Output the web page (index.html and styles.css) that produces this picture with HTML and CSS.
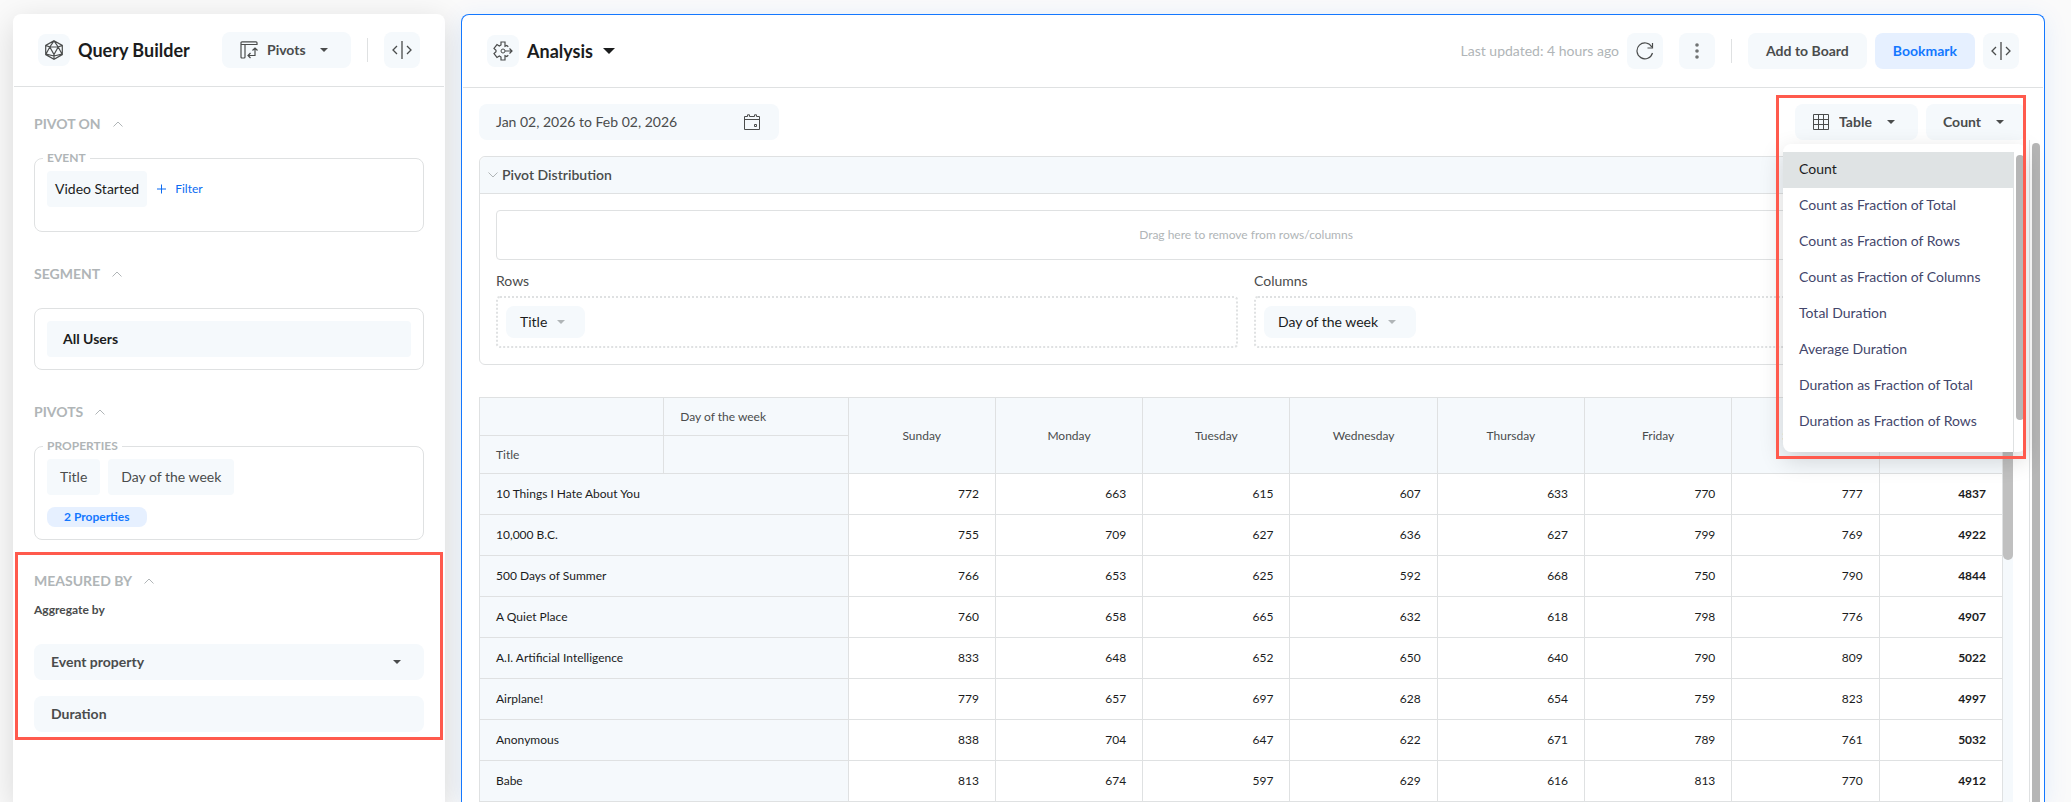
FILE: index.html
```html
<!DOCTYPE html>
<html lang="en">
<head>
  <meta charset="UTF-8" />
  <meta name="viewport" content="width=device-width, initial-scale=1.0" />
  <title>Query Builder</title>
  <link rel="stylesheet" href="styles.css">
</head>
<body>
  <div class="app">
    <aside class="sidebar">
      <header class="sidebar-header">
        <span class="icon-box">
          <svg width="20" height="20" viewBox="0 0 20 20"><path stroke-width="1.2" d="M10 .8 18.3 5.400v9.200L10 19.200 1.700 14.600V5.400zM10 .8 5.800 7 2 14l8 2 8-2-3.800-7zM1.700 5.400 5.800 7h8.400l4.100-1.600M5.800 7 10 14.500 14.200 7M10 14.500v4.700"/></svg>
        </span>
        <h1>Query Builder</h1>
        <label class="pick pivots-pick">
          <svg width="18" height="18" viewBox="0 0 18 18"><path stroke-width="1.2" d="M2 .8h14q1 0 1 1v1.700H5v12.500q0 1-1 1H2q-1 0-1-1V1.800q0-1 1-1zM1 3.500h4M15 7v7.500H8M12.500 9.500 15 7l2.500 2.500M10.500 12 8 14.500l2.500 2.500"/></svg>
          <select aria-label="Query type"><option>Pivots</option></select>
          <i class="caret"></i>
        </label>
        <span class="divider"></span>
        <button class="icon-btn" aria-label="Collapse query builder">
          <svg width="20" height="18" viewBox="0 0 20 18"><path stroke-width="1.3" d="M5 5 1 9l4 4M15 5l4 4-4 4M10 0v18"/></svg>
        </button>
      </header>

      <div class="sidebar-body">
        <section class="group">
          <h2>PIVOT ON <svg width="10" height="6" viewBox="0 0 10 6"><path d="M.5 5.500 5 1l4.500 4.500"/></svg></h2>
          <fieldset>
            <legend>EVENT</legend>
            <div class="chips event-chips">
              <button class="chip chip-event">Video Started</button>
              <button class="filter-btn"><svg width="9" height="10" viewBox="0 0 9 10"><path d="M4.500.5v9M0 5h9"/></svg>Filter</button>
            </div>
          </fieldset>
        </section>

        <section class="group">
          <h2>SEGMENT <svg width="10" height="6" viewBox="0 0 10 6"><path d="M.5 5.500 5 1l4.500 4.500"/></svg></h2>
          <div class="box">
            <button class="chip chip-wide">All Users</button>
          </div>
        </section>

        <section class="group">
          <h2>PIVOTS <svg width="10" height="6" viewBox="0 0 10 6"><path d="M.5 5.500 5 1l4.500 4.500"/></svg></h2>
          <fieldset>
            <legend>PROPERTIES</legend>
            <div class="chips">
              <button class="chip">Title</button>
              <button class="chip">Day of the week</button>
            </div>
            <button class="pill">2 Properties</button>
          </fieldset>
        </section>
      </div>

      <section class="measured">
        <h2>MEASURED BY <svg width="10" height="6" viewBox="0 0 10 6"><path d="M.5 5.500 5 1l4.500 4.500"/></svg></h2>
        <label class="aggregate" for="aggregate">Aggregate by</label>
        <div class="pick field">
          <select id="aggregate"><option>Event property</option></select>
          <i class="caret"></i>
        </div>
        <button class="field">Duration</button>
      </section>
    </aside>

    <main class="panel">
      <header class="panel-header">
        <span class="icon-box">
          <svg width="20" height="20" viewBox="0 0 20 20"><path stroke-width="1.2" d="M15.300 5.800 13.800 4.500l-1.800.8V1H8v3L6.300 5 4 3.600 1 7.500l2 1.800v1.400l-2 1.800 3 3.900L6.300 15 8 16v3h4v-4.300l1.800.8 1.500-1.300M12 10h7M16.500 7.500 19 10l-2.500 2.500"/><circle cx="10" cy="10" r="2"/></svg>
        </span>
        <h1>Analysis</h1>
        <button class="title-caret" aria-label="Switch analysis"><i class="caret caret-lg"></i></button>
        <span class="updated">Last updated: 4 hours ago</span>
        <button class="icon-btn" aria-label="Refresh">
          <svg width="18" height="18" viewBox="0 0 18 18"><path stroke-width="1.200" d="M16.500 11A7.900 7.900 0 1 1 15.800 5M16.500 1v5h-5"/></svg>
        </button>
        <button class="icon-btn more-btn" aria-label="More">
          <svg class="dots" width="4" height="18" viewBox="0 0 4 18"><circle cx="2" cy="3" r="1.800"/><circle cx="2" cy="9" r="1.800"/><circle cx="2" cy="15" r="1.800"/></svg>
        </button>
        <span class="divider"></span>
        <div class="actions">
          <button class="btn">Add to Board</button>
          <button class="btn btn-primary">Bookmark</button>
          <button class="icon-btn" aria-label="Collapse analysis">
            <svg width="20" height="18" viewBox="0 0 20 18"><path stroke-width="1.3" d="M5 5 1 9l4 4M15 5l4 4-4 4M10 0v18"/></svg>
          </button>
        </div>
      </header>

      <div class="toolbar">
        <button class="date-range">
          Jan 02, 2026 to Feb 02, 2026
          <svg width="16" height="16" viewBox="0 0 16 16"><path d="M.5 2.500h3V.8h2v1.700h5V.8h2v1.700h3v13H.5zM.5 5.500h15M10.500 10.500h2v2h-2z"/></svg>
        </button>
        <div class="view-picks">
          <label class="pick view-pick">
            <svg width="16" height="16" viewBox="0 0 16 16"><path d="M.5.5h15v15H.5zM.5 5.500h15M.5 10.500h15M5.500.5v15M10.500.5v15"/></svg>
            <select aria-label="View"><option>Table</option></select>
            <i class="caret"></i>
          </label>
          <button class="pick count-pick" aria-haspopup="listbox" aria-expanded="true">Count <i class="caret"></i></button>
          <div class="menu">
            <ul role="listbox" aria-label="Measure">
              <li role="option" aria-selected="true" class="selected">Count</li>
              <li role="option">Count as Fraction of Total</li>
              <li role="option">Count as Fraction of Rows</li>
              <li role="option">Count as Fraction of Columns</li>
              <li role="option">Total Duration</li>
              <li role="option">Average Duration</li>
              <li role="option">Duration as Fraction of Total</li>
              <li role="option">Duration as Fraction of Rows</li>
            </ul>
            <div class="menu-track"><i></i></div>
          </div>
          <div class="highlight"></div>
        </div>
      </div>

      <div class="content">
        <div class="content-main">
          <section class="distribution">
            <h3><svg width="10" height="6" viewBox="0 0 10 6"><path d="M.5.5 5 5 9.500.5"/></svg>Pivot Distribution</h3>
            <div class="distribution-body">
              <div class="drop-remove">Drag here to remove from rows/columns</div>
              <div class="axes">
                <div>
                  <h4>Rows</h4>
                  <div class="drop"><button class="tag">Title <i class="caret"></i></button></div>
                </div>
                <div>
                  <h4>Columns</h4>
                  <div class="drop"><button class="tag">Day of the week <i class="caret"></i></button></div>
                </div>
              </div>
            </div>
          </section>

          <div class="table-wrap">
            <table>
              <colgroup>
                <col class="col-head"><col class="col-head">
                <col><col><col><col><col><col><col>
                <col class="col-total">
              </colgroup>
              <thead>
                <tr>
                  <th></th><th>Day of the week</th>
                  <th rowspan="2" class="day">Sunday</th>
                  <th rowspan="2" class="day">Monday</th>
                  <th rowspan="2" class="day">Tuesday</th>
                  <th rowspan="2" class="day">Wednesday</th>
                  <th rowspan="2" class="day">Thursday</th>
                  <th rowspan="2" class="day">Friday</th>
                  <th rowspan="2" class="day">Saturday</th>
                  <th rowspan="2" class="day">Totals</th>
                </tr>
                <tr><th>Title</th><th></th></tr>
              </thead>
              <tbody>
                <tr><th colspan="2">10 Things I Hate About You</th><td>772</td><td>663</td><td>615</td><td>607</td><td>633</td><td>770</td><td>777</td><td>4837</td></tr>
                <tr><th colspan="2">10,000 B.C.</th><td>755</td><td>709</td><td>627</td><td>636</td><td>627</td><td>799</td><td>769</td><td>4922</td></tr>
                <tr><th colspan="2">500 Days of Summer</th><td>766</td><td>653</td><td>625</td><td>592</td><td>668</td><td>750</td><td>790</td><td>4844</td></tr>
                <tr><th colspan="2">A Quiet Place</th><td>760</td><td>658</td><td>665</td><td>632</td><td>618</td><td>798</td><td>776</td><td>4907</td></tr>
                <tr><th colspan="2">A.I. Artificial Intelligence</th><td>833</td><td>648</td><td>652</td><td>650</td><td>640</td><td>790</td><td>809</td><td>5022</td></tr>
                <tr><th colspan="2">Airplane!</th><td>779</td><td>657</td><td>697</td><td>628</td><td>654</td><td>759</td><td>823</td><td>4997</td></tr>
                <tr><th colspan="2">Anonymous</th><td>838</td><td>704</td><td>647</td><td>622</td><td>671</td><td>789</td><td>761</td><td>5032</td></tr>
                <tr><th colspan="2">Babe</th><td>813</td><td>674</td><td>597</td><td>629</td><td>616</td><td>813</td><td>770</td><td>4912</td></tr>
              </tbody>
            </table>
            <div class="table-track"><i></i></div>
          </div>
        </div>
        <div class="content-track"><i></i></div>
      </div>
    </main>
  </div>
</body>
</html>
```
FILE: styles.css
```css
* {
  margin: 0;
  padding: 0;
  box-sizing: border-box;
}

body {
  background: #fafafa;
  color: #4a4c4c;
  font-family: Lato, sans-serif;
  font-size: 14px;
  line-height: 20px;
  overflow: hidden;
}

button,
select {
  font: inherit;
  color: inherit;
  background: none;
  border: none;
  appearance: none;
  cursor: pointer;
}

svg {
  flex: none;
  fill: none;
  stroke: #4a4c4c;
}

.app {
  display: flex;
  gap: 16px;
  height: 100vh;
  padding: 14px 26px 0 13px;
}

/* shared controls */

.icon-box,
.icon-btn {
  flex: none;
  display: flex;
  align-items: center;
  justify-content: center;
  width: 36px;
  height: 36px;
  border-radius: 8px;
  background: #f5f9fc;
}

.icon-box {
  width: 32px;
  height: 32px;
}

.divider {
  width: 1px;
  height: 24px;
  background: #dfe1e2;
}

.caret {
  flex: none;
  border: 4px solid transparent;
  border-top-color: #4a4c4c;
  border-bottom: none;
}

.caret-lg {
  border-width: 6px;
  border-bottom: none;
  border-top-color: #1b1c1d;
}

.pick {
  display: flex;
  align-items: center;
  height: 36px;
  border-radius: 8px;
  background: #f5f9fc;
  font-weight: 700;
}

h1 {
  color: #1b1c1d;
  font-size: 18px;
  line-height: 24px;
}

/* query builder */

.sidebar {
  position: relative;
  flex: none;
  width: 432px;
  border-radius: 8px 8px 0 0;
  background: #fff;
  box-shadow: 0 8px 32px rgba(0, 0, 0, 0.14);
}

.sidebar-header {
  display: flex;
  align-items: center;
  height: 73px;
  margin: 0 1px;
  padding: 0 24px;
  border-bottom: 1px solid #dfe1e2;
}

.sidebar-header h1 {
  margin-left: 8px;
}

.pivots-pick {
  width: 129px;
  margin-left: auto;
  padding: 0 23px 0 18px;
}

.pivots-pick select {
  flex: 1;
  padding-left: 9px;
}

.sidebar-header .divider {
  margin: 0 16px;
}

.sidebar-body {
  padding: 27px 21px 12px;
}

.group {
  margin-bottom: 32px;
}

.group:last-child {
  margin-bottom: 0;
}

h2 {
  display: flex;
  align-items: center;
  gap: 12px;
  color: #b0b5b7;
  font-size: 14px;
  line-height: 20px;
}

h2 svg,
h3 svg {
  stroke: #b0b5b7;
}

fieldset,
.box {
  margin-top: 24px;
  padding: 12px;
  border: 1px solid #dfe1e2;
  border-radius: 8px;
}

fieldset {
  margin-top: 16px;
  padding-top: 5px;
}

legend {
  margin-left: -4px;
  padding: 0 4px;
  color: #b0b5b7;
  font-size: 12px;
  font-weight: 700;
  line-height: 16px;
}

.chips {
  display: flex;
  gap: 8px;
}

.event-chips {
  margin-bottom: 12px;
}

.chip {
  height: 36px;
  padding: 0 13px;
  border-radius: 4px;
  background: #f5f9fc;
}

.chip-event {
  padding: 0 8px;
  color: #1b1c1d;
}

.chip-wide {
  display: block;
  width: 100%;
  padding: 0 16px;
  color: #1b1c1d;
  font-weight: 700;
  text-align: left;
}

.filter-btn {
  display: flex;
  align-items: center;
  gap: 9px;
  padding-left: 2px;
  color: #0b6bf2;
  font-size: 12px;
}

.filter-btn svg {
  stroke: #0b6bf2;
}

.pill {
  display: block;
  height: 20px;
  margin-top: 12px;
  padding: 0 17px;
  border-radius: 8px;
  background: #e6f0ff;
  color: #1478ff;
  font-size: 12px;
  font-weight: 700;
}

.measured {
  margin: 0 2px;
  padding: 16px 16px 5px;
  border: 3px solid #ff5a4d;
}

.aggregate {
  display: block;
  margin: 11px 0 26px;
  font-size: 12px;
  font-weight: 700;
  line-height: 16px;
}

.field {
  display: flex;
  align-items: center;
  width: 100%;
  height: 36px;
  padding: 0 23px 0 17px;
  border-radius: 8px;
  background: #f5f9fc;
  font-weight: 700;
}

.field select {
  flex: 1;
}

.field + .field {
  margin-top: 16px;
}

/* analysis */

.panel {
  position: relative;
  flex: 1;
  display: flex;
  flex-direction: column;
  min-width: 0;
  border: 1px solid #1478ff;
  border-bottom: none;
  border-radius: 8px 8px 0 0;
  background: #fff;
  box-shadow: 0 4px 24px rgba(20, 120, 255, 0.1);
}

.panel-header {
  flex: none;
  display: flex;
  align-items: center;
  height: 73px;
  margin: 0 1px;
  padding: 0 24px;
  border-bottom: 1px solid #dfe1e2;
}

.panel-header h1 {
  margin: 0 10px 0 8px;
}

.title-caret {
  display: flex;
}

.updated {
  margin: 0 8px 0 auto;
  color: #b0b5b7;
}

.more-btn {
  margin: 0 16px;
}

.dots {
  fill: #707373;
  stroke: none;
}

.actions {
  display: flex;
  gap: 8px;
  margin-left: 16px;
}

.btn {
  height: 36px;
  padding: 0 18px;
  border-radius: 8px;
  background: #f5f9fc;
  font-weight: 700;
}

.btn-primary {
  background: #e6f0ff;
  color: #1478ff;
}

.toolbar {
  flex: none;
  display: flex;
  justify-content: space-between;
  padding: 16px 18px 0 17px;
}

.date-range {
  display: flex;
  align-items: center;
  justify-content: space-between;
  width: 300px;
  height: 36px;
  padding: 0 19px 0 17px;
  border-radius: 8px;
  background: #f5f9fc;
}

.view-picks {
  position: relative;
  display: flex;
  gap: 8px;
}

.view-pick {
  width: 123px;
  padding: 0 23px 0 18px;
}

.view-pick select {
  flex: 1;
  padding-left: 10px;
}

.count-pick {
  justify-content: space-between;
  width: 100px;
  padding: 0 22px 0 17px;
}

.menu {
  position: absolute;
  z-index: 2;
  top: 40px;
  right: 0;
  display: flex;
  width: 243px;
  height: 308px;
  padding-top: 8px;
  border-radius: 8px;
  background: #fff;
  box-shadow: 0 8px 24px rgba(0, 0, 0, 0.16);
}

.menu ul {
  flex: 1;
  list-style: none;
  color: #43466b;
}

.menu li {
  height: 36px;
  padding: 7px 16px;
}

.menu .selected {
  background: #dfe3e4;
  color: #1b1c1d;
}

.menu-track {
  width: 13px;
  padding: 3px 0 0 2px;
  border-left: 1px solid #dfe1e2;
}

.menu-track i {
  display: block;
  width: 8px;
  height: 265px;
  border-radius: 4px;
  background: #b6b6b6;
}

.highlight {
  position: absolute;
  z-index: 3;
  top: -9px;
  right: 0;
  width: 250px;
  height: 364px;
  border: 3px solid #ff5a4d;
  pointer-events: none;
}

.content {
  flex: 1;
  display: flex;
  min-height: 0;
}

.content-main {
  flex: 1;
  min-width: 0;
  padding: 16px 16px 0 17px;
}

.content-track,
.table-track {
  flex: none;
  width: 15px;
  padding: 3px 0 0 2px;
  border-left: 1px solid #dfe1e2;
}

.content-track i,
.table-track i {
  display: block;
  width: 8px;
  height: 100%;
  border-radius: 4px 4px 0 0;
  background: #b6b6b6;
}

.distribution {
  border: 1px solid #dfe1e2;
  border-radius: 6px;
}

h3 {
  display: flex;
  align-items: center;
  gap: 4px;
  height: 37px;
  padding: 0 8px;
  border-bottom: 1px solid #dfe1e2;
  border-radius: 6px 6px 0 0;
  background: #f5f9fc;
  font-size: 14px;
  font-weight: 600;
}

.distribution-body {
  padding: 16px;
}

.drop-remove {
  display: flex;
  align-items: center;
  justify-content: center;
  height: 50px;
  border: 1px solid #dfe1e2;
  border-radius: 4px;
  color: #b0b5b7;
  font-size: 12px;
}

.axes {
  display: grid;
  grid-template-columns: 1fr 1fr;
  gap: 16px;
  margin-top: 11px;
}

h4 {
  margin-bottom: 5px;
  font-size: 14px;
  font-weight: 400;
}

.drop {
  height: 52px;
  padding: 8px;
  border: 2px dotted #dfe1e2;
  border-radius: 4px;
}

.tag {
  display: flex;
  align-items: center;
  gap: 10px;
  height: 32px;
  padding: 0 20px 0 14px;
  border-radius: 8px;
  background: #f5f9fc;
  color: #1b1c1d;
}

.tag .caret {
  border-top-color: #b0b5b7;
}

.table-wrap {
  display: flex;
  margin-top: 32px;
}

table {
  flex: 1;
  width: 0;
  table-layout: fixed;
  border-collapse: collapse;
  color: #1b1c1d;
  font-size: 12px;
}

.col-head {
  width: 12.1%;
}

.col-total {
  width: 8.1%;
}

th,
td {
  height: 41px;
  padding: 0 16px;
  border: 1px solid #dfe1e2;
}

th {
  background: #f5f9fc;
  font-weight: 400;
  text-align: left;
}

thead th {
  height: 38px;
  color: #4a4c4c;
}

.day {
  text-align: center;
}

td {
  text-align: right;
}

td:last-child {
  font-weight: 700;
}

.table-track {
  width: 10px;
  padding: 0;
  border: none;
  background: #f5f9fc;
}

.table-track i {
  width: 10px;
  height: 163px;
  border-radius: 0 0 5px 5px;
  background: #c0c0c0;
}
```
